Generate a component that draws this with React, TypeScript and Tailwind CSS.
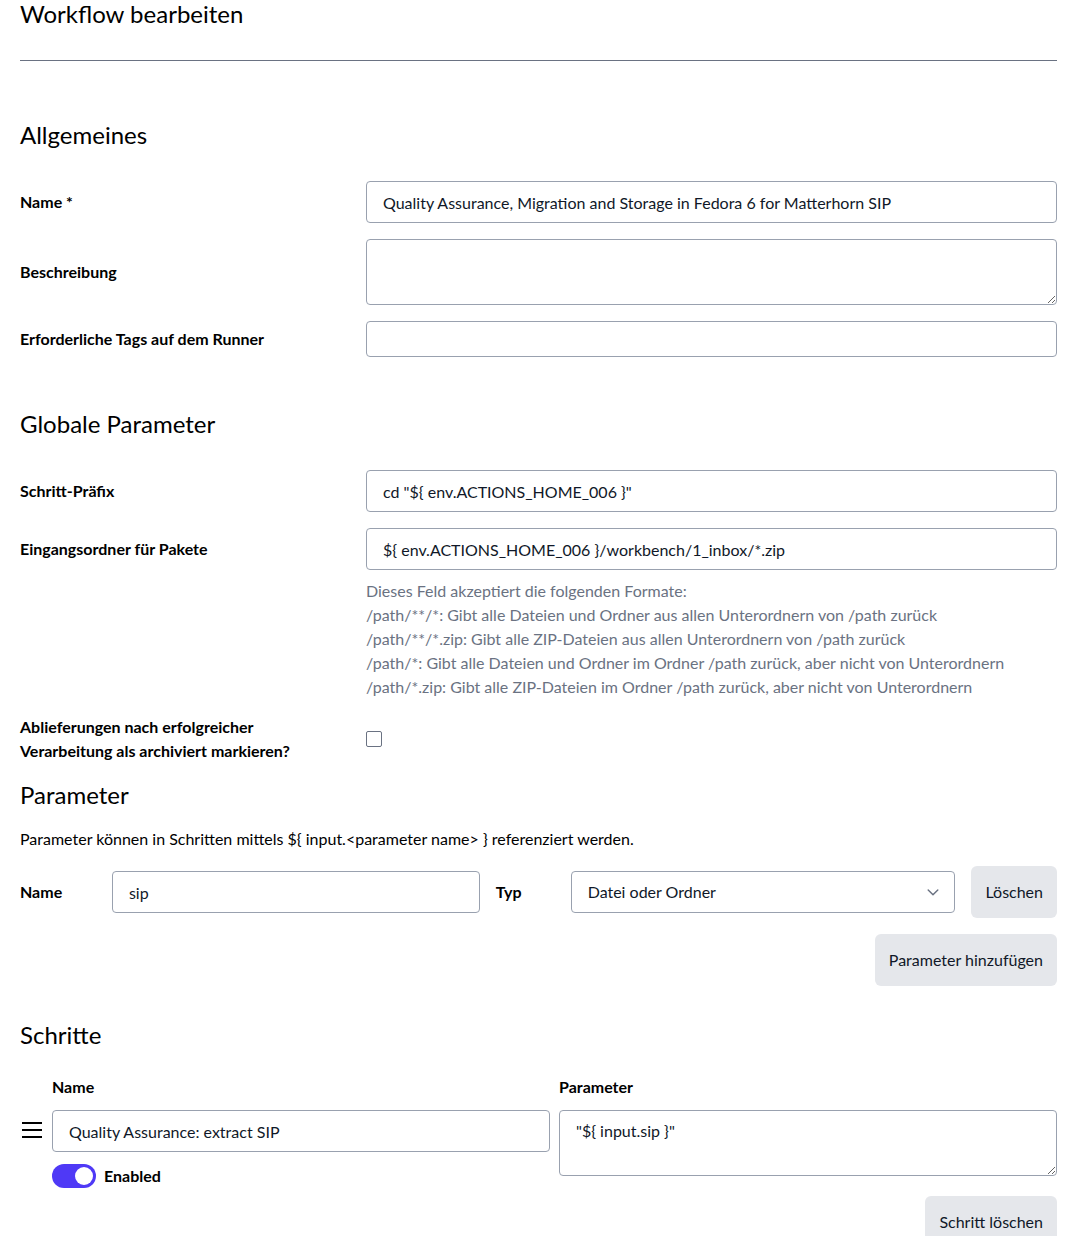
import { useState } from 'react';

const font = "font-['Lato','Noto_Sans',sans-serif]";
// base field styles; width and height are set per use
const fieldCls =
  'rounded border border-gray-400 bg-white px-4 text-base leading-6 text-gray-900 outline-none';
const textareaCls =
  'w-full block rounded border border-gray-400 bg-white px-4 py-2 text-base leading-6 text-gray-900 outline-none resize-y';
const buttonCls =
  'rounded-md bg-gray-200 px-[14px] h-[52px] text-base leading-6 text-gray-900';

const helpLines = [
  'Dieses Feld akzeptiert die folgenden Formate:',
  '/path/**/*: Gibt alle Dateien und Ordner aus allen Unterordnern von /path zurück',
  '/path/**/*.zip: Gibt alle ZIP-Dateien aus allen Unterordnern von /path zurück',
  '/path/*: Gibt alle Dateien und Ordner im Ordner /path zurück, aber nicht von Unterordnern',
  '/path/*.zip: Gibt alle ZIP-Dateien im Ordner /path zurück, aber nicht von Unterordnern',
];

function SectionTitle({ children, className = '' }: { children: React.ReactNode; className?: string }) {
  return <h2 className={`text-2xl leading-8 text-black ${className}`}>{children}</h2>;
}

export default function App() {
  const [enabled, setEnabled] = useState(true);
  const [archive, setArchive] = useState(false);

  return (
    <div className={`${font} min-h-screen bg-white text-black`}>
      <div className="w-[1037px] ml-5">
        <h1 className="text-2xl leading-7">Workflow bearbeiten</h1>
        <hr className="mt-8 border-t border-gray-500" />

        <SectionTitle className="mt-[58px]">Allgemeines</SectionTitle>

        <div className="mt-[30px] grid grid-cols-[346px_1fr] gap-y-4 items-center">
          <label className="font-bold">Name *</label>
          <input
            className={`${fieldCls} w-full h-[42px]`}
            defaultValue="Quality Assurance, Migration and Storage in Fedora 6 for Matterhorn SIP"
          />
          <label className="font-bold">Beschreibung</label>
          <textarea className={textareaCls} rows={2} defaultValue="" />
          <label className="font-bold">Erforderliche Tags auf dem Runner</label>
          <input className={`${fieldCls} w-full h-9`} defaultValue="" />
        </div>

        <SectionTitle className="mt-[51px]">Globale Parameter</SectionTitle>

        <div className="mt-[30px] grid grid-cols-[346px_1fr] gap-y-4 items-start">
          <div className="h-[42px] flex items-center font-bold">Schritt-Präfix</div>
          <input className={`${fieldCls} w-full h-[42px]`} defaultValue={'cd "${ env.ACTIONS_HOME_006 }"'} />
          <div className="h-[42px] flex items-center font-bold">Eingangsordner für Pakete</div>
          <div>
            <input
              className={`${fieldCls} w-full h-[42px]`}
              defaultValue="${ env.ACTIONS_HOME_006 }/workbench/1_inbox/*.zip"
            />
            <div className="mt-[9px] text-gray-500 leading-6">
              {helpLines.map((l) => (
                <div key={l}>{l}</div>
              ))}
            </div>
          </div>
          <div className="font-bold leading-6 self-center">
            Ablieferungen nach erfolgreicher
            <br />
            Verarbeitung als archiviert markieren?
          </div>
          <div className="self-center flex items-center h-12">
            <input
              type="checkbox"
              checked={archive}
              onChange={(e) => setArchive(e.target.checked)}
              className="appearance-none w-4 h-4 border border-gray-500 rounded-[2px] bg-white checked:bg-indigo-600"
            />
          </div>
        </div>

        <SectionTitle className="mt-4">Parameter</SectionTitle>
        <p className="mt-4 leading-6">
          Parameter können in Schritten mittels {'${ input.<parameter name> }'} referenziert werden.
        </p>

        <div className="mt-[15px] flex items-center">
          <label className="w-[92px] font-bold">Name</label>
          <input className={`${fieldCls} w-[368px] h-[42px]`} defaultValue="sip" />
          <label className="ml-4 w-[75px] font-bold">Typ</label>
          <div className="relative w-[385px]">
            <select
              className={`${fieldCls} w-full h-[42px] appearance-none pr-10`}
              defaultValue="file"
            >
              <option value="file">Datei oder Ordner</option>
              <option value="string">Text</option>
            </select>
            <svg
              className="pointer-events-none absolute right-[14px] top-1/2 -translate-y-1/2 text-gray-500"
              width="16"
              height="16"
              viewBox="0 0 20 20"
              fill="none"
              stroke="currentColor"
              strokeWidth="1.8"
              strokeLinecap="round"
              strokeLinejoin="round"
            >
              <path d="M4 7.5l6 6 6-6" />
            </svg>
          </div>
          <button className={`${buttonCls} ml-4`}>Löschen</button>
        </div>

        <div className="mt-4 flex justify-end">
          <button className={buttonCls}>Parameter hinzufügen</button>
        </div>

        <SectionTitle className="mt-[33px]">Schritte</SectionTitle>

        <div className="mt-6 flex">
          <div className="w-8 pt-[35px]">
            <svg width="20" height="20" viewBox="0 0 20 20" className="ml-[2px] mt-[10px]">
              <path d="M0 3h20M0 10h20M0 17h20" stroke="black" strokeWidth="2" />
            </svg>
          </div>
          <div className="flex-1 grid grid-cols-2 gap-x-[9px]">
            <div>
              <div className="font-bold leading-6">Name</div>
              <input
                className={`${fieldCls} w-full h-[42px] mt-[11px] text-gray-700`}
                defaultValue="Quality Assurance: extract SIP"
              />
              <label className="mt-3 flex items-center gap-2 cursor-pointer">
                <button
                  type="button"
                  onClick={() => setEnabled(!enabled)}
                  className={`relative w-11 h-6 rounded-full ${enabled ? 'bg-indigo-600' : 'bg-gray-300'}`}
                >
                  <span
                    className={`absolute top-[3px] w-[18px] h-[18px] rounded-full bg-white ${enabled ? 'left-[23px]' : 'left-[3px]'}`}
                  />
                </button>
                <span className="font-bold">Enabled</span>
              </label>
            </div>
            <div>
              <div className="font-bold leading-6">Parameter</div>
              <textarea
                className={`${textareaCls} mt-[11px] text-gray-700`}
                rows={2}
                defaultValue={'"${ input.sip }"'}
              />
              <div className="mt-5 flex justify-end">
                <button className={buttonCls}>Schritt löschen</button>
              </div>
            </div>
          </div>
        </div>
      </div>
    </div>
  );
}
